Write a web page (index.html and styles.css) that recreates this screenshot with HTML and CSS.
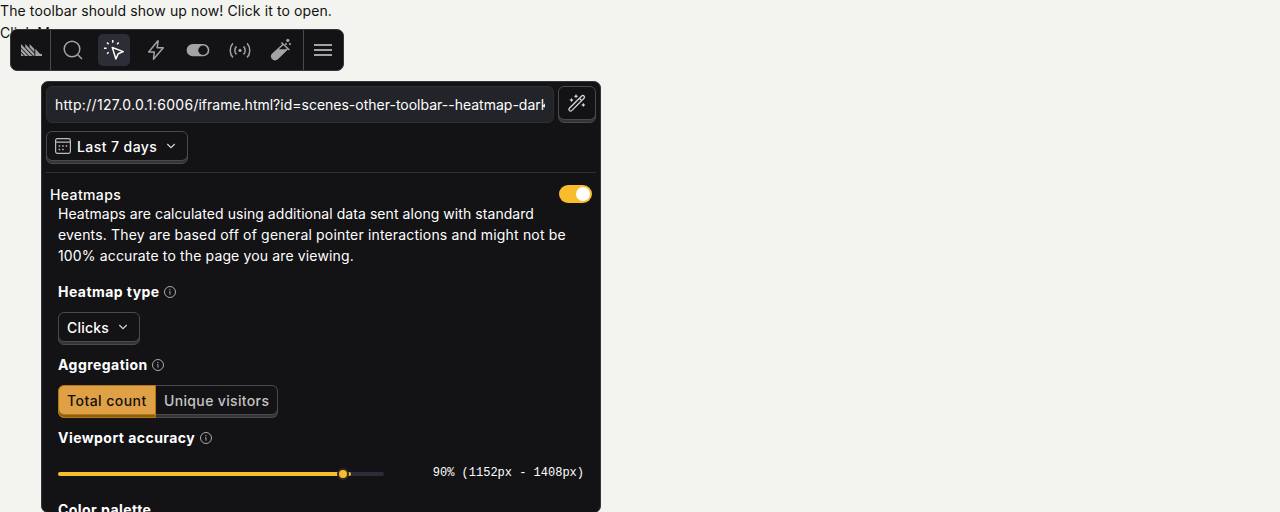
FILE: index.html
```html
<!DOCTYPE html>
<html lang="en">
<head>
<meta charset="utf-8">
<title>Toolbar</title>
<link rel="stylesheet" href="styles.css">
</head>
<body>
<main class="page">
  <div>The toolbar should show up now! Click it to open.</div>
  <button class="plain">Click Me</button>
</main>

<nav class="toolbar">
  <div class="tool logo">
    <svg width="21" height="12" viewBox="0 0 22 12" preserveAspectRatio="none" fill="#a3a3a5"><path d="M0 0l12 12H8.600L0 3.400zM0 4.500L7.500 12H4.200L0 7.800zM0 9l3 3H0zM4.500 0l9.500 9.500V12h-.8L4.500 3.300zM9 0l5 5v3.300L9 3.300zM15 4.800l4 4.100c.7.700 1.600 1.100 3 1.100v2h-7z"/></svg>
  </div>
  <div class="tools">
    <div class="tool nudge"><svg class="icon" viewBox="0 0 24 24"><circle cx="11" cy="11" r="7.800"/><path d="M16.700 16.700l4.300 4.300"/></svg></div>
    <div class="tool active"><svg class="icon" viewBox="0 0 24 24"><path d="M10.300 9.500l11 4.100-5.100 2.100-2.300 5.200zM10.700 2v2.700M5 4.600l1.600 1.700M2 10.200h2.600M5.100 15.800l1.500-1.500M16.700 4.600l-1.600 1.700"/></svg></div>
    <div class="tool"><svg class="icon" viewBox="0 0 24 24"><path d="M13.700 3L4.700 14h5.600l-.8 7.200L19.300 9.800h-6.200l1.100-6.800z"/></svg></div>
    <div class="tool nudge"><svg class="icon" viewBox="0 0 24 24"><rect x="1.400" y="6.800" width="21.200" height="10.800" rx="5.400" fill="currentColor"/><circle cx="17" cy="12.200" r="4.700" fill="#131315" stroke="none"/></svg></div>
    <div class="tool nudge"><svg class="icon" viewBox="0 0 24 24"><circle cx="12" cy="12.400" r="1.600" fill="currentColor" stroke="none"/><path d="M8.500 8.400a5.700 5.700 0 0 0 0 8M15.500 8.400a5.700 5.700 0 0 1 0 8M4.900 5.200a11 11 0 0 0 0 14.400M19.100 5.200a11 11 0 0 1 0 14.400"/></svg></div>
    <div class="tool"><svg class="icon" viewBox="0 0 24 24"><path d="M12.400 4.500l8 7.500M14.200 6.300L3.600 16.200a3.200 3.200 0 0 0 4.500 4.500L18.700 10.500"/><path d="M8.600 12h8.600L8.200 20.700c-3.200 2.600-7.300-1.500-4.500-4.500z" fill="currentColor"/><g fill="currentColor" stroke="none"><circle cx="18.800" cy="2.400" r="1.600"/><circle cx="20.900" cy="6" r="1.100"/><circle cx="17" cy="6" r="1"/></g></svg></div>
  </div>
  <div class="tool menu"><svg width="18" height="12" viewBox="0 0 18 12" fill="#a3a3a5"><path d="M0 0h18v2H0zM0 5h18v2H0zM0 10h18v2H0z"/></svg></div>
</nav>

<section class="panel">
  <div class="url-row">
    <div class="url"><span class="address"><span class="host">http://127.0.0.1:6006</span>/iframe.html?id=scenes-other-toolbar--heatmap-dark</span></div>
    <button class="btn wand"><svg class="wand-icon" viewBox="0 0 18 18"><path d="M1.400 14.300L13.700 2a1.600 1.600 0 0 1 2.300 2.300L3.700 16.600a1.600 1.600 0 0 1-2.300-2.300zM11.400 4.300l2.300 2.300"/><path class="spark" d="M8 0l.75 1.450 1.450.75-1.450.75L8 4.400l-.75-1.450L5.800 2.200l1.450-.75zM3.500 3.900l.75 1.450 1.450.75-1.450.75-.75 1.450-.75-1.450-1.450-.75 1.450-.75zM15.300 8.700l.75 1.450 1.450.75-1.450.75-.75 1.450-.75-1.450-1.450-.75 1.450-.75z"/></svg></button>
  </div>
  <div class="date-row">
    <button class="btn date"><svg class="cal" viewBox="0 0 16 16"><rect x=".6" y=".6" width="14.800" height="14.800" rx="1.800"/><path d="M.6 4.200h14.800"/><path class="dots" d="M7.200 7.200h1.500v1.500H7.200zM10.700 7.200h1.500v1.500h-1.500zM3.700 10.700h1.500v1.500H3.700zM3.700 7.200h1.500v1.500H3.700zM7.200 10.700h1.500v1.500H7.200z"/></svg><span>Last 7 days</span><svg class="chev" viewBox="0 0 10 6"><path d="M1.300 1L5 4.700 8.700 1"/></svg></button>
  </div>
  <div class="heading"><span>Heatmaps</span><span class="switch"></span></div>
  <div class="body">
    <p>Heatmaps are calculated using additional data sent along with standard <span class="loose">events. They are based off of general pointer interactions and might not be</span> <span class="medium">100% accurate to the page you are viewing.</span></p>
    <h4>Heatmap type <svg class="info" viewBox="0 0 12 12"><circle cx="6" cy="6" r="5.500"/><path d="M5.200 5.600H6v3"/><circle class="dot" cx="5.900" cy="3.700" r=".65"/></svg></h4>
    <button class="btn clicks"><span>Clicks</span><svg class="chev" viewBox="0 0 10 6"><path d="M1.300 1L5 4.700 8.700 1"/></svg></button>
    <h4>Aggregation <svg class="info" viewBox="0 0 12 12"><circle cx="6" cy="6" r="5.500"/><path d="M5.200 5.600H6v3"/><circle class="dot" cx="5.900" cy="3.700" r=".65"/></svg></h4>
    <div class="segmented"><button class="btn selected">Total count</button><button class="btn other">Unique visitors</button></div>
    <h4>Viewport accuracy <svg class="info" viewBox="0 0 12 12"><circle cx="6" cy="6" r="5.500"/><path d="M5.200 5.600H6v3"/><circle class="dot" cx="5.900" cy="3.700" r=".65"/></svg></h4>
    <div class="slider-row">
      <div class="slider"><div class="fill"></div><div class="thumb"></div></div>
      <code>90% (1152px - 1408px)</code>
    </div>
    <h4>Color palette</h4>
  </div>
</section>
</body>
</html>
```

FILE: styles.css
```css
* { box-sizing: border-box; }
html, body { height: 512px; margin: 0; overflow: hidden; }
body { position: relative; background: #f3f4ef; color: #111; font: 14px/21px Inter, "Liberation Sans", sans-serif; letter-spacing: .11px; }
button { font: inherit; letter-spacing: inherit; color: inherit; margin: 0; }
svg { display: block; flex: none; overflow: visible; }
.page { display: flex; flex-direction: column; align-items: flex-start; gap: 1px; line-height: 21px; }
.plain { padding: 0; border: 0; background: none; }

.toolbar { position: absolute; left: 10px; top: 29px; width: 334px; height: 42px; display: flex; background: #131315; border: 1px solid #35353d; border-radius: 7px; color: #a3a3a5; }
.tool { flex: none; width: 32px; height: 32px; display: flex; align-items: center; justify-content: center; border-radius: 5px; }
.logo { width: 40px; height: 40px; border-right: 1px solid #4a4a4f; border-radius: 0; padding-left: 2px; }
.tools { flex: 1; display: flex; align-items: center; justify-content: space-between; padding: 0 6px 0 5px; }
.nudge { padding-left: 2px; }
.menu { width: 40px; height: 40px; border-left: 1px solid #4a4a4f; border-radius: 0; padding-right: 2px; }
.active { background: #2d2d37; color: #fff; }
.icon { width: 24px; height: 24px; fill: none; stroke: currentColor; stroke-width: 1.5; stroke-linejoin: round; }

.panel { position: absolute; left: 41px; top: 81px; width: 560px; height: 432px; padding: 4px; overflow: hidden; background: #131315; border: 1px solid #35353d; border-radius: 7px; color: #fff; }
.url-row { display: flex; gap: 4px; height: 37px; }
.url { width: 508px; padding: 0 8px; display: flex; align-items: center; background: #232429; border: 1px solid #2d2d34; border-radius: 6px; }
.address { flex: 1; overflow: hidden; white-space: nowrap; letter-spacing: 0; }
.host { letter-spacing: .3px; }
.btn { display: flex; align-items: center; height: 33px; padding: 0 8px 3px; border: 1px solid #4a4a4d; border-radius: 6px; background: #131315; box-shadow: inset 0 -2px #343436, inset 0 -3px #4a4a4d; font-weight: 500; letter-spacing: .38px; white-space: nowrap; }
.wand { width: 38px; height: 37px; justify-content: center; padding: 0 0 3px; }
.wand-icon { width: 18px; height: 18px; fill: none; stroke: #d6d6d6; stroke-width: 1.3; }
.wand-icon .spark { fill: #d6d6d6; stroke: none; }
.date-row { height: 50px; padding-top: 8px; border-bottom: 1px solid #303038; }
.date { width: 142px; letter-spacing: .42px; }
.cal { width: 16px; height: 16px; margin-right: 6px; fill: none; stroke: #bcbcbd; stroke-width: 1.2; }
.cal .dots { fill: #bcbcbd; stroke: none; }
.chev { width: 10px; height: 6px; margin-left: auto; margin-right: 3px; fill: none; stroke: #d8d8d8; stroke-width: 1.2; }
.heading { display: flex; justify-content: space-between; height: 30px; padding: 11px 4px 0; font-weight: 500; letter-spacing: .38px; }
.switch { flex: none; width: 33px; height: 18px; margin-top: 1px; padding: 2px; border-radius: 9px; background: #f9bd2b; display: flex; justify-content: flex-end; }
.switch::after { content: ""; width: 14px; height: 14px; border-radius: 50%; background: #fff; }
.body { padding: 0 12px; }
p { margin: 0 0 15px; width: 526px; letter-spacing: .06px; }
.loose { letter-spacing: .17px; }
.medium { letter-spacing: .14px; }
h4 { display: flex; align-items: center; gap: 4.500px; height: 21px; margin: 0; font-size: 14px; font-weight: 700; letter-spacing: .45px; }
.info { width: 12px; height: 12px; fill: none; stroke: #aaaaac; stroke-width: 1; }
.info .dot { fill: #aaaaac; stroke: none; }
.clicks { width: 82px; margin: 10px 0 9px; letter-spacing: .2px; }
.segmented { display: flex; width: 220px; margin: 10px 0 9px; }
.selected { flex: none; width: 98px; background: #e0a045; color: #111; border-color: #b17816; border-radius: 6px 0 0 6px; box-shadow: inset 0 -2px #8f5d10, inset 0 -3px #b17816; letter-spacing: .45px; }
.other { flex: 1; min-width: 0; padding-right: 0; border-left: 0; border-radius: 0 6px 6px 0; color: #c4c4c5; letter-spacing: .35px; }
.slider-row { display: flex; align-items: center; justify-content: space-between; height: 20px; margin: 15px 0 16px; letter-spacing: 0; }
.slider { position: relative; width: 326px; height: 4px; margin-top: 2px; border-radius: 2px; background: #2d2d37; }
.fill { width: 90%; height: 4px; border-radius: 2px; background: #f9bd2b; }
.thumb { position: absolute; left: 279px; top: -4px; width: 12px; height: 12px; border: 2px solid #2a2927; border-radius: 50%; background: #f9bd2b; }
code { font: 12px/16px "Liberation Mono", monospace; }
```
